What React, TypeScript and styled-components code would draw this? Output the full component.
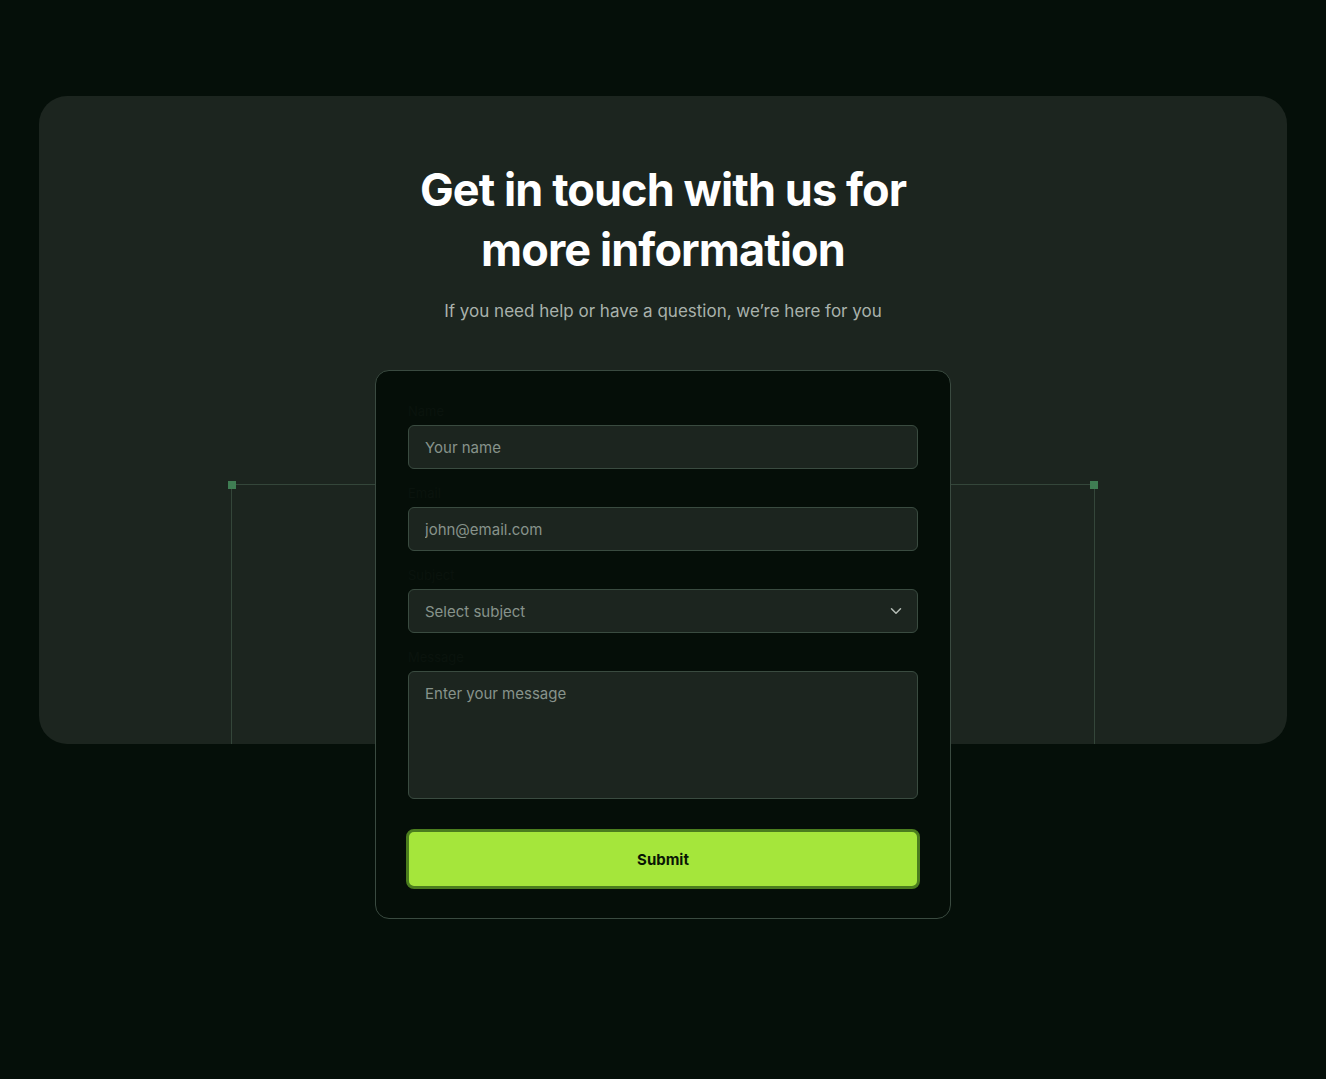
import React from 'react'
import styled, { createGlobalStyle } from 'styled-components'

const GlobalStyle = createGlobalStyle`
  * { box-sizing: border-box; }
  html, body {
    margin: 0;
    padding: 0;
    background: #050f09;
    font-family: Inter, "Noto Sans", sans-serif;
  }
`

const Page = styled.div`
  min-height: 1079px;
  padding: 96px 39px 0;
`

const Hero = styled.section`
  position: relative;
  height: 648px;
  background: #1c251f;
  border-radius: 28px;
  padding-top: 64px;
  display: flex;
  flex-direction: column;
  align-items: center;
`

const Frame = styled.div`
  position: absolute;
  left: 192px;
  right: 192px;
  top: 388px;
  bottom: 0;
  border: 1px solid #34463a;
  border-bottom: none;
`

const Handle = styled.span<{ side: 'left' | 'right' }>`
  position: absolute;
  top: -4px;
  ${p => (p.side === 'left' ? 'left: -4px;' : 'right: -4px;')}
  width: 8px;
  height: 8px;
  background: #3f7d53;
`

const Title = styled.h1`
  position: relative;
  margin: 0;
  width: 520px;
  text-align: center;
  color: #ffffff;
  font-size: 45px;
  line-height: 60px;
  font-weight: 700;
  letter-spacing: -0.9px;
`

const Subtitle = styled.p`
  position: relative;
  margin: 19px 0 0;
  color: #a9b2ac;
  font-size: 17px;
  line-height: 24px;
`

const Card = styled.form`
  position: relative;
  margin-top: 47px;
  width: 576px;
  background: #050e08;
  border: 1px solid #3a4a40;
  border-radius: 14px;
  padding: 32px 32px 29px;
  display: flex;
  flex-direction: column;
`

const Field = styled.div`
  display: flex;
  flex-direction: column;
  gap: 6px;
  margin-bottom: 16px;
`

const Label = styled.label`
  color: #0a130d;
  font-size: 13px;
  line-height: 16px;
`

const controlCss = `
  width: 100%;
  background: #1c251f;
  border: 1px solid #3a4b40;
  border-radius: 6px;
  color: #dfe5e1;
  font-family: inherit;
  font-size: 15px;
  padding: 0 16px;
  outline: none;
  &::placeholder { color: #87938b; }
`

const Input = styled.input`
  ${controlCss}
  height: 44px;
`

const SelectBox = styled.div`
  ${controlCss}
  height: 44px;
  display: flex;
  align-items: center;
  justify-content: space-between;
  color: #87938b;
  padding-right: 12px;
`

const TextArea = styled.textarea`
  ${controlCss}
  height: 128px;
  padding-top: 12px;
  resize: none;
`

const SubmitButton = styled.button`
  margin: 14px -2px 0;
  height: 60px;
  background: #a5e63b;
  border: 3px solid #4b7d1e;
  border-radius: 8px;
  color: #0a1605;
  font-family: inherit;
  font-size: 15px;
  font-weight: 700;
  cursor: pointer;
`

export default function App() {
  return (
    <>
      <GlobalStyle />
      <Page>
        <Hero>
          <Frame>
            <Handle side="left" />
            <Handle side="right" />
          </Frame>
          <Title>Get in touch with us for more information</Title>
          <Subtitle>If you need help or have a question, we’re here for you</Subtitle>
          <Card onSubmit={e => e.preventDefault()}>
            <Field>
              <Label>Name</Label>
              <Input placeholder="Your name" />
            </Field>
            <Field>
              <Label>Email</Label>
              <Input placeholder="john@email.com" />
            </Field>
            <Field>
              <Label>Subject</Label>
              <SelectBox>
                <span>Select subject</span>
                <svg width="18" height="18" viewBox="0 0 24 24" fill="none" stroke="#b4bcb6" strokeWidth="2" strokeLinecap="round" strokeLinejoin="round">
                  <path d="M6 9l6 6 6-6" />
                </svg>
              </SelectBox>
            </Field>
            <Field>
              <Label>Message</Label>
              <TextArea placeholder="Enter your message" />
            </Field>
            <SubmitButton type="submit">Submit</SubmitButton>
          </Card>
        </Hero>
      </Page>
    </>
  )
}
